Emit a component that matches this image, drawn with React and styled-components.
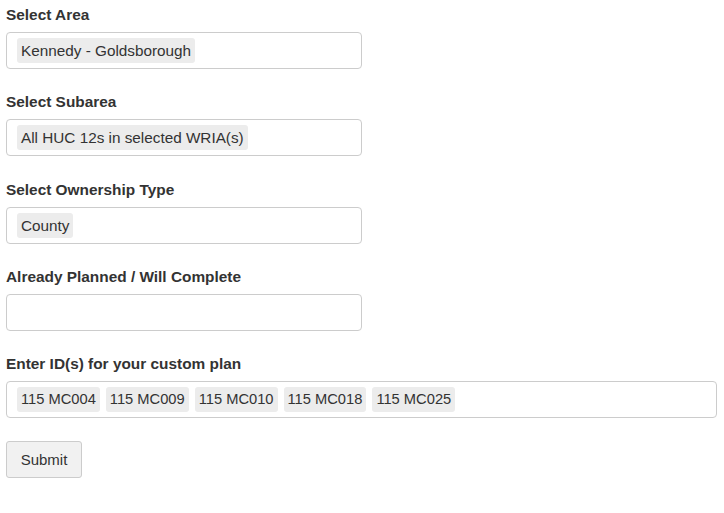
import React from 'react';
import styled, { createGlobalStyle } from 'styled-components';

const GlobalStyle = createGlobalStyle`
  body {
    margin: 0;
    font-family: "Liberation Sans", Arial, Helvetica, sans-serif;
    color: #333;
    background: #fff;
  }
`;

const fields = [
  { label: 'Select Area', tags: ['Kennedy - Goldsborough'] },
  { label: 'Select Subarea', tags: ['All HUC 12s in selected WRIA(s)'] },
  { label: 'Select Ownership Type', tags: ['County'] },
  { label: 'Already Planned / Will Complete', tags: [] },
  {
    label: 'Enter ID(s) for your custom plan',
    tags: ['115 MC004', '115 MC009', '115 MC010', '115 MC018', '115 MC025'],
    wide: true,
  },
];

const App = () => {
  return (
    <Form>
      <GlobalStyle />
      {fields.map((f) => (
        <Group key={f.label}>
          <Label>{f.label}</Label>
          <TagBox wide={f.wide ? 1 : 0}>
            {f.tags.map((t) => (
              <Tag key={t} compact={f.wide ? 1 : 0}>{t}</Tag>
            ))}
          </TagBox>
        </Group>
      ))}
      <SubmitBtn type="button">Submit</SubmitBtn>
    </Form>
  );
};

export default App;

const Form = styled.div`
  padding: 5px 7px 20px 6px;
`;

const Group = styled.div`
  margin-bottom: 23.25px;
`;

const Label = styled.div`
  font-size: 15.4px;
  font-weight: 700;
  line-height: 19px;
  margin-bottom: 8px;
  color: #333;
`;

const TagBox = styled.div`
  box-sizing: border-box;
  width: ${(p) => (p.wide ? '100%' : '356px')};
  height: 37px;
  border: 1px solid #ccc;
  border-radius: 4px;
  padding: 5px 10px;
  display: flex;
  align-items: center;
  gap: 6px;
`;

const Tag = styled.span`
  background: #ececec;
  border-radius: 3px;
  padding: 0 4px;
  height: 25px;
  line-height: 25px;
  font-size: ${(p) => (p.compact ? '14.7px' : '15.3px')};
  color: #333;
  white-space: nowrap;
`;

const SubmitBtn = styled.button`
  display: block;
  width: 76px;
  height: 37px;
  font-family: "Liberation Sans", Arial, sans-serif;
  font-size: 15px;
  color: #333;
  background: #f1f1f1;
  border: 1px solid #ccc;
  border-radius: 3px;
  cursor: pointer;
`;
